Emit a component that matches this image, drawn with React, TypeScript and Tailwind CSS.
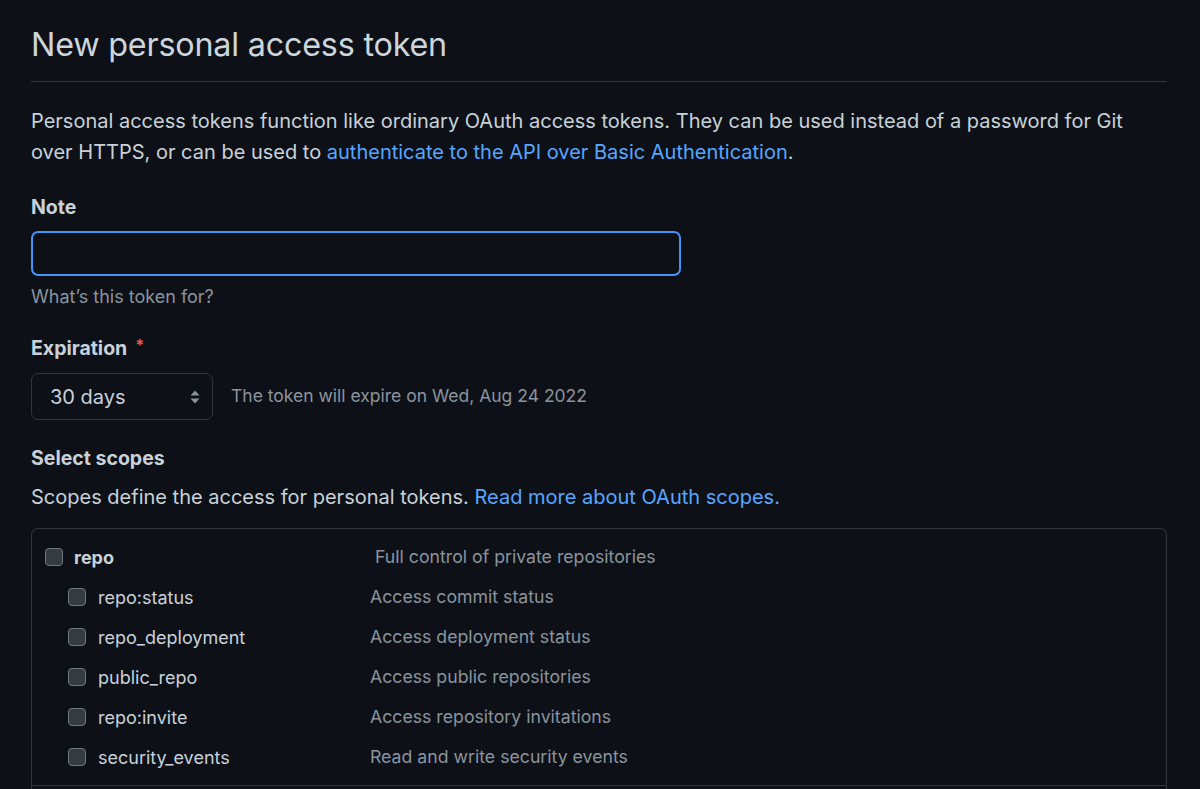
import React from "react";

const scopes = [
  { name: "repo:status", desc: "Access commit status" },
  { name: "repo_deployment", desc: "Access deployment status" },
  { name: "public_repo", desc: "Access public repositories" },
  { name: "repo:invite", desc: "Access repository invitations" },
  { name: "security_events", desc: "Read and write security events" },
];

function Box() {
  return (
    <span className="block w-[18px] h-[18px] shrink-0 rounded-[4px] border border-[#6e7681] bg-[#363b42]" />
  );
}

export default function App() {
  return (
    <div
      className="min-h-[789px] w-full bg-[#0d1117] text-[#c9d1d9] overflow-hidden"
      style={{ fontFamily: "Inter, 'Noto Sans', sans-serif" }}
    >
      <div className="ml-[31px] w-[1136px]">
        <div className="pt-[25px] pb-[16px] border-b border-[#30363d]">
          <h1 className="text-[32.3px] leading-[40px] font-normal text-[#cdd5dd] tracking-[-0.2px]">
            New personal access token
          </h1>
        </div>

        <p className="mt-[24px] text-[20px] leading-[31px] whitespace-nowrap">
          Personal access tokens function like ordinary OAuth access tokens. They can be used instead of a password for Git
          <br />
          over HTTPS, or can be used to{" "}
          <a className="text-[#58a6ff]">authenticate to the API over Basic Authentication</a>.
        </p>

        <div className="mt-[25px] text-[19.5px] leading-[28px] font-bold">Note</div>
        <div className="mt-[10px] w-[650px] h-[45px] rounded-[7px] border-2 border-[#4493f8] bg-[#0d1117]" />
        <div className="mt-[9px] text-[18px] leading-[24px] text-[#8b949e]">What’s this token for?</div>

        <div className="mt-[25px] text-[19.5px] leading-[28px] font-bold flex items-start">
          Expiration
          <span className="text-[#f85149] ml-[8px] text-[16px] leading-[22px]">*</span>
        </div>
        <div className="mt-[11px] flex items-center">
          <div className="w-[182px] h-[47px] rounded-[7px] border border-[#30363d] bg-[#0d1117] flex items-center justify-between pl-[18px] pr-[12px]">
            <span className="text-[20px] text-[#c9d1d9]">30 days</span>
            <svg width="10" height="16" viewBox="0 0 10 16">
              <path d="M5 1.5 L9.5 6.5 H0.5 Z" fill="#8b949e" />
              <path d="M5 14.5 L9.5 9.5 H0.5 Z" fill="#8b949e" />
            </svg>
          </div>
          <span className="ml-[18px] text-[17.5px] text-[#8b949e]">The token will expire on Wed, Aug 24 2022</span>
        </div>

        <div className="mt-[24px] text-[19.5px] leading-[28px] font-bold">Select scopes</div>
        <div className="mt-[11px] text-[20px] leading-[28px] whitespace-nowrap">
          Scopes define the access for personal tokens.{" "}
          <a className="text-[#58a6ff]">Read more about OAuth scopes.</a>
        </div>

        <div className="mt-[17px] rounded-t-[7px] border border-[#30363d] border-b-0 h-[300px]">
          <div className="border-b border-[#30363d] pt-[17px] pb-[17px]">
            <div className="flex items-center h-[22px] pl-[13px]">
              <Box />
              <span className="ml-[11px] w-[301px] text-[18px] font-bold">repo</span>
              <span className="text-[17.7px] text-[#8b949e]">Full control of private repositories</span>
            </div>
            {scopes.map((s) => (
              <div key={s.name} className="flex items-center h-[22px] mt-[18px] pl-[36px]">
                <Box />
                <span className="ml-[12px] w-[272px] text-[18px]">{s.name}</span>
                <span className="text-[17.7px] text-[#8b949e]">{s.desc}</span>
              </div>
            ))}
          </div>
        </div>
      </div>
    </div>
  );
}
